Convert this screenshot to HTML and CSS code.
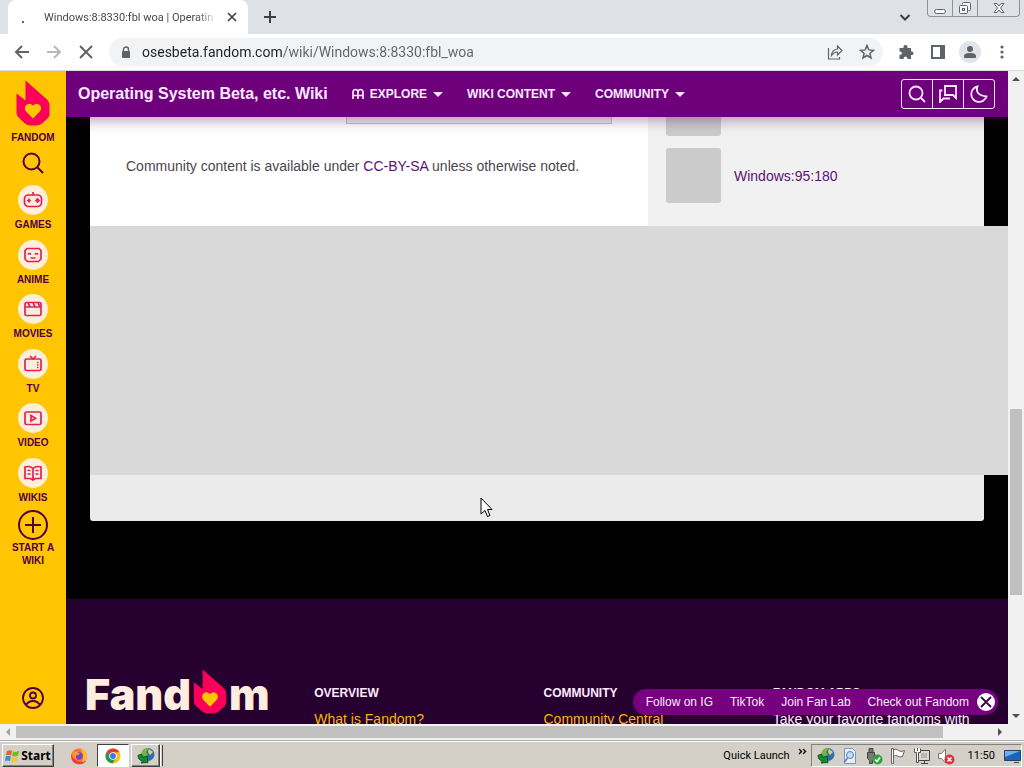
FILE: index.html
```html
<!DOCTYPE html>
<html lang="en">
<head>
  <meta charset="UTF-8">
  <title>Windows:8:8330:fbl woa | Operating System Beta, etc. Wiki</title>
  <link rel="stylesheet" href="styles.css">
</head>
<body>
  <!-- shared shapes -->
  <svg class="defs" aria-hidden="true">
    <symbol id="flame" viewBox="0 0 34 46">
      <path fill="#fa005a" d="M9.500.5 31 19.500Q33.500 22 33.500 25V34.500Q33.500 36.500 32 38L26 43.500Q23.500 45.500 20.500 45.500H14.500Q11.500 45.500 9 43.500L2.500 37.500Q.5 35.500.5 33V13.500L9.500 20.500Z"/>
      <path fill="#ffc500" d="M17 38.500 10.500 32Q7.500 28.500 10 25.300 13.500 22 17 25.500 20.500 22 24 25.300 26.500 28.500 23.500 32Z"/>
    </symbol>
    <symbol id="search" viewBox="0 0 22 22">
      <circle cx="9.500" cy="9.500" r="8"/>
      <path d="M15.500 15.500 21 21"/>
    </symbol>
    <symbol id="globe" viewBox="0 0 18 18">
      <circle cx="11" cy="7.500" r="6.500" fill="#2c6fb5"/>
      <path fill="#77b843" d="M5 4Q8 0 12 1.500L9 5 11 8 7 10 4 8Z"/>
      <path fill="#e2d264" d="m12 2 4 3-3 3-2-3Z"/>
      <path fill="#178a35" stroke="#0a5320" d="M1 8.500 4.500 7 6 10.500l4-1.500 1 6.500-7 .5 1.500-2Q1 13 1 8.500Z"/>
    </symbol>
  </svg>

  <header class="tabstrip">
    <div class="tab">
      <span class="spinner"></span>
      <span class="tab-title">Windows:8:8330:fbl woa | Operatin</span>
      <button class="tab-close" aria-label="Close tab"><svg viewBox="0 0 10 10"><path d="m1 1 8 8M9 1 1 9"/></svg></button>
    </div>
    <button class="new-tab" aria-label="New tab"><svg viewBox="0 0 14 14"><path d="M7 1v12M1 7h12"/></svg></button>
    <button class="tab-search" aria-label="Search tabs"><svg viewBox="0 0 12 12"><path d="m1.500 4 4.500 4.500L10.500 4"/></svg></button>
    <div class="window-buttons">
      <button aria-label="Minimize"><svg viewBox="0 0 14 14"><rect x="1.500" y="8.500" width="11" height="4" rx="2"/></svg></button>
      <button aria-label="Restore"><svg viewBox="0 0 14 14"><path d="M4.500 3.500V2.500q0-1 1-1h6q1 0 1 1v6q0 1-1 1h-1"/><rect x="1.500" y="4.500" width="8" height="8" rx="1"/><rect x="4.500" y="7.500" width="2" height="2"/></svg></button>
      <button class="wide" aria-label="Close"><svg viewBox="0 0 14 14"><path d="M2 2.500h3l2 2.500 2-2.500h3L8.500 7 12 11.500H9L7 9 5 11.500H2L5.500 7Z"/></svg></button>
    </div>
  </header>

  <div class="toolbar">
    <button class="tool" aria-label="Back"><svg viewBox="0 0 16 16"><path d="M15 8H2M8 2 2 8l6 6"/></svg></button>
    <button class="tool faded" aria-label="Forward"><svg viewBox="0 0 16 16"><path d="M1 8h13M8 2l6 6-6 6"/></svg></button>
    <button class="tool" aria-label="Stop"><svg viewBox="0 0 16 16"><path d="m2 2 12 12M14 2 2 14"/></svg></button>
    <div class="omnibox">
      <svg class="lock" viewBox="0 0 10 13"><rect x="1" y="5" width="8" height="7" rx="1" fill="#5f6368"/><path d="M2.500 5.500V3.500a2.500 2.500 0 0 1 5 0v2" fill="none" stroke="#5f6368" stroke-width="1.400"/></svg>
      <input type="text" class="url" aria-label="Address" value="osesbeta.fandom.com/wiki/Windows:8:8330:fbl_woa">
      <button class="tool" aria-label="Share"><svg class="thin" viewBox="0 0 16 16"><path d="M1.500 4v11h11v-2M4.500 11.500Q5 5.500 10.500 5V2L15 6.500 10.500 11V8Q7 8 4.500 11.500Z"/></svg></button>
      <button class="tool" aria-label="Bookmark"><svg viewBox="0 0 16 16"><path stroke-width="1.500" d="m8 1.500 1.800 4.400 4.700.4-3.600 3.100 1.100 4.600L8 11.500 4 14l1.100-4.600L1.500 6.300l4.700-.4Z"/></svg></button>
    </div>
    <button class="tool" aria-label="Extensions"><svg viewBox="0 0 16 16"><path class="solid" d="M2 4h3.500Q5 1 7.500 1T9.500 4H13v3.500q2.500-.5 2.500 1.700T13 11v4H9.500q0-2.500-2-2.500t-2 2.500H1.500v-4q2.500 0 2.500-1.800T1.500 7.500V4Z"/></svg></button>
    <button class="tool" aria-label="Side panel"><svg viewBox="0 0 16 16"><path class="solid" d="M1 1h14v14H1ZM3 3v10h7V3Z" fill-rule="evenodd"/></svg></button>
    <button class="tool avatar" aria-label="Profile"><svg viewBox="0 0 16 16"><circle class="solid" cx="8" cy="5" r="3"/><path class="solid" d="M2 14v-2q0-3 6-3t6 3v2Z"/></svg></button>
    <button class="tool" aria-label="Menu"><svg viewBox="0 0 16 16"><circle class="solid" cx="8" cy="3" r="1.600"/><circle class="solid" cx="8" cy="8" r="1.600"/><circle class="solid" cx="8" cy="13" r="1.600"/></svg></button>
  </div>

  <div class="viewport">
    <nav class="rail">
      <a href="#" class="rail-logo"><svg><use href="#flame"/></svg>FANDOM</a>
      <button class="rail-search" aria-label="Search"><svg><use href="#search"/></svg></button>
      <ul class="rail-list">
        <li><a href="#"><svg viewBox="0 0 30 30"><rect x="6.500" y="10" width="17" height="11.500" rx="4"/><path d="M15 7v3M9 15.500h4M11 13.500v4M18 15.500l1.500-1.500 1.500 1.500-1.500 1.500Z"/></svg>GAMES</a></li>
        <li><a href="#"><svg viewBox="0 0 30 30"><path d="M9 8.500h12l2 2V19l-2.500 2.500h-11L7 19v-8.500ZM10 14.500q1.500-2 3 0M17 14.500q1.500-2 3 0M12.500 18h5"/></svg>ANIME</a></li>
        <li><a href="#"><svg viewBox="0 0 30 30"><rect x="7" y="8.500" width="16" height="13" rx="1.500"/><path d="M7 13h16M10 9l2 3.500M15 9l2 3.500M20 9l2 3.500"/></svg>MOVIES</a></li>
        <li><a href="#"><svg viewBox="0 0 30 30"><rect x="7" y="10" width="16" height="11.500" rx="1.500"/><path d="m12 7 3 3 3-3M19 13.500h1.500M19 16h1.500M19 18.500h1.500"/></svg>TV</a></li>
        <li><a href="#"><svg viewBox="0 0 30 30"><rect x="7" y="9" width="16" height="12.500" rx="1.500"/><path d="M13 12.500v5.500l4.500-2.700Z"/></svg>VIDEO</a></li>
        <li><a href="#"><svg viewBox="0 0 30 30"><path d="M15 10.500Q12 7.500 7 9v11.500h5.500L15 22l2.500-1.500H23V9q-5-1.500-8 1.500ZV21M9.500 12.500h3M9.500 16h3M17.500 12.500h3M17.500 16h3"/></svg>WIKIS</a></li>
      </ul>
      <a href="#" class="rail-start"><svg viewBox="0 0 30 30"><circle cx="15" cy="15" r="14"/><path d="M15 7v16M7 15h16"/></svg>START A WIKI</a>
      <button class="rail-user" aria-label="Account"><svg viewBox="0 0 22 22"><circle cx="11" cy="11" r="10"/><circle cx="11" cy="8.500" r="3"/><path d="M4 18q2.500-4 7-4t7 4"/></svg></button>
    </nav>

    <div class="page">
      <header class="wiki-header">
        <a href="#" class="wiki-name">Operating System Beta, etc. Wiki</a>
        <button class="menu"><svg class="book" viewBox="0 0 12 12"><path d="M1 11V4.500Q1 1.500 3.500 1.500T6 4.500V11M6 4.500Q6 1.500 8.500 1.500T11 4.500V11M1 7.500h10"/></svg>EXPLORE<i class="caret"></i></button>
        <button class="menu">WIKI CONTENT<i class="caret"></i></button>
        <button class="menu">COMMUNITY<i class="caret"></i></button>
        <div class="wiki-tools">
          <button aria-label="Search"><svg viewBox="0 0 18 18"><circle cx="8" cy="8" r="6.500"/><path d="m13 13 4 4"/></svg></button>
          <button aria-label="Discuss"><svg viewBox="0 0 18 18"><path d="M6 1h11v12l-3-3H6ZM3.500 5.500H1V17l3.500-3.500H11"/></svg></button>
          <button aria-label="Dark theme"><svg viewBox="0 0 18 18"><path d="M7.500 1.500Q4.500 10 16.500 11.500A7.800 7.800 0 1 1 7.500 1.500Z"/></svg></button>
        </div>
      </header>

      <main class="content">
        <div class="columns">
          <article class="article">
            <div class="box-end"></div>
            <p>Community content is available under <a href="#">CC-BY-SA</a> unless otherwise noted.</p>
          </article>
          <aside class="side">
            <div class="thumb cut"></div>
            <a href="#" class="popular"><span class="thumb"></span>Windows:95:180</a>
          </aside>
        </div>
        <div class="ad"></div>
        <div class="page-end"></div>
      </main>

      <footer class="footer">
        <a href="#" class="brand" aria-label="Fandom">Fand<svg><use href="#flame"/></svg>m</a>
        <section>
          <h3>OVERVIEW</h3>
          <a href="#">What is Fandom?</a>
        </section>
        <section>
          <h3>COMMUNITY</h3>
          <a href="#">Community Central</a>
        </section>
        <section>
          <h3>FANDOM APPS</h3>
          <p>Take your favorite fandoms with</p>
        </section>
      </footer>

      <div class="wiki-bar">
        <a href="#">Follow on IG</a>
        <a href="#">TikTok</a>
        <a href="#">Join Fan Lab</a>
        <a href="#">Check out Fandom</a>
        <button aria-label="Close bar"><svg viewBox="0 0 18 18"><circle cx="9" cy="9" r="9"/><path d="m4 4 10 10M14 4 4 14"/></svg></button>
      </div>
    </div>

    <div class="vscroll">
      <i class="arrow up"></i>
      <div class="track"><div class="handle"></div></div>
      <i class="arrow down"></i>
    </div>

    <svg class="cursor" viewBox="0 0 13 21"><path d="M1 1v16l4-3.500L7.500 19.500l2.500-1L7.500 12.500H12Z" fill="#fff" stroke="#000"/></svg>
  </div>

  <div class="hscroll">
    <i class="arrow left"></i>
    <div class="track"><div class="handle"></div></div>
    <i class="arrow right"></i>
  </div>

  <footer class="taskbar">
    <button class="start"><svg viewBox="0 0 16 16"><path fill="#e8602c" d="M2 3q3-2 5.500-.5L6.500 7.500Q4 6 1 7.500Z"/><path fill="#76b82a" d="M8.500 3q3 1.500 6.500-.5L14 7.500q-3 1.500-6.500.5Z"/><path fill="#3c8fd6" d="M.8 8.500q3-1.500 5.500 0l-1 5Q3 12-.2 13.500Z"/><path fill="#fbc62d" d="M7.200 9q3 1.500 6.500-.3l-1 5q-3 1.500-6.500.3Z"/></svg>Start</button>
    <button class="launch" aria-label="Firefox"><svg viewBox="0 0 18 18"><circle cx="9" cy="9.500" r="8" fill="#ff7139"/><path fill="#ffbd2e" d="M11 1q6 3.500 6 9-1 5-6 6 3-4 2-9Q11 5 11 1Z"/><path fill="#f2334c" d="M1 9q1 8 9 8 4 0 6-3-5 2-9 0-5-2-6-8Z"/><circle cx="9" cy="9" r="3.700" fill="#7542c9"/><path fill="#ff9a1f" d="M3 4q2 1 4 1l3 1.500Q9 8 6.500 8.500 5 10 7 12 2 12 3 4Z"/></svg></button>
    <button class="task active" aria-label="Chrome"><svg viewBox="0 0 18 18"><circle cx="9" cy="9" r="7.500" fill="#fbc116"/><path fill="#e33b2e" d="M9 9 2.500 5.200A7.500 7.500 0 0 1 15.500 5.200L9 5.500Z"/><path fill="#249a4c" d="M9 9 2.500 5.200A7.500 7.500 0 0 0 8.500 16.500L12 10.800Z"/><circle cx="9" cy="9" r="3.800" fill="#fff"/><circle cx="9" cy="9" r="2.900" fill="#3979e8"/></svg></button>
    <button class="task" aria-label="Download manager"><svg><use href="#globe"/></svg></button>
    <i class="grip"></i>
    <span class="quick">Quick Launch</span>
    <button class="more" aria-label="Show more"><svg viewBox="0 0 9 7"><path d="m1 1 2.500 2.500L1 6M5 1l2.500 2.500L5 6"/></svg></button>
    <div class="tray">
      <svg><use href="#globe"/></svg>
      <svg viewBox="0 0 18 18"><path fill="#e6effb" stroke="#7c95be" d="M3.500 1.500h8l3 3v12h-11Z"/><circle cx="9" cy="8" r="3.500" fill="#c7dcf5" stroke="#5580bf"/><path stroke="#5580bf" stroke-width="1.500" d="m6.500 11-3 4"/></svg>
      <svg viewBox="0 0 18 18"><path fill="#777" stroke="#444" d="M2.500 5.500h7v6l-2 2v3h-3v-3l-2-2ZM4 1.500h4v4H4Z"/><circle cx="12.500" cy="12.500" r="5" fill="#31a336"/><path fill="none" stroke="#fff" stroke-width="1.600" d="m10 12.500 2 2 3-4"/></svg>
      <svg viewBox="0 0 18 18"><path fill="#fff" stroke="#666" d="M2.500 1.500h2v15h-2ZM4.500 2.500q3-1 5 1t6 0l-2 6q-3 1-5-.5t-4 .5Z"/></svg>
      <svg viewBox="0 0 18 18"><path fill="#d9d9d3" stroke="#444" d="M5.500 3.500h11v10h-11ZM8 16.500h7M11.500 13.500v3"/><path fill="#b9b9b3" d="M8 6h6v5H8Z"/><path fill="#fff" stroke="#555" d="M1.500 1.500v4h2v10h2v-10h2v-4M4.500 1v3"/></svg>
      <svg viewBox="0 0 18 18"><path fill="#fff" stroke="#777" d="M1.500 6.500h3l4-4.500v14l-4-4.500h-3Z"/><circle cx="12.500" cy="12.500" r="5" fill="#da3340"/><path stroke="#fff" stroke-width="1.500" d="m10.500 10.500 4 4M14.500 10.500l-4 4"/></svg>
      <time>11:50</time>
      <svg viewBox="0 0 18 18"><path fill="#1d63b8" stroke="#23405f" d="M1.500 3.500h16v10h-16Z"/><path fill="#6ab0ee" d="M2 4h15L2 10Z"/><path stroke="#444" d="M11 15.500h5"/></svg>
    </div>
  </footer>
</body>
</html>
```
FILE: styles.css
```css
* {
  box-sizing: border-box;
}

body {
  margin: 0;
  height: 100vh;
  display: flex;
  flex-direction: column;
  overflow: hidden;
  font-family: "Liberation Sans", Arial, sans-serif;
  font-size: 14px;
}

a {
  color: inherit;
  text-decoration: none;
}

button {
  display: flex;
  align-items: center;
  justify-content: center;
  padding: 0;
  border: none;
  background: none;
  color: inherit;
  font: inherit;
}

svg {
  flex: none;
  fill: none;
}

h3,
p,
ul {
  margin: 0;
  padding: 0;
}

.defs {
  position: absolute;
  width: 0;
  height: 0;
}

/* browser tabs */
.tabstrip {
  flex: none;
  display: flex;
  align-items: center;
  height: 34px;
  padding: 0 4px 0 8px;
  background: #dee1e6;
}

.tab {
  display: flex;
  align-items: center;
  width: 240px;
  height: 34px;
  padding: 0 11px 0 14px;
  border-radius: 8px 8px 0 0;
  background: #fff;
}

.spinner {
  width: 2px;
  height: 2px;
  margin: 10px 20px 0 0;
  background: #5f6368;
}

.tab-title {
  flex: 1;
  overflow: hidden;
  white-space: nowrap;
  font: 11px Roboto, sans-serif;
  color: #45494d;
  -webkit-mask-image: linear-gradient(90deg, #000 88%, transparent);
}

.tab-close svg {
  width: 10px;
  height: 10px;
  margin-left: 9px;
  stroke: #3c4043;
  stroke-width: 1.6;
}

.new-tab {
  margin-left: 15px;
}

.new-tab svg {
  width: 14px;
  height: 14px;
  stroke: #3c4043;
  stroke-width: 2;
}

.tab-search {
  margin: 0 16px 0 auto;
}

.tab-search svg {
  width: 12px;
  height: 12px;
  stroke: #3c4043;
  stroke-width: 2;
}

.window-buttons {
  display: flex;
  align-self: flex-start;
  height: 17px;
  border: 1px solid #8d929b;
  border-top: none;
  border-radius: 0 0 4px 4px;
}

.window-buttons button {
  width: 25px;
  border-right: 1px solid #8d929b;
}

.window-buttons .wide {
  width: 41px;
  border-right: none;
}

.window-buttons svg {
  width: 14px;
  height: 14px;
  fill: #f7f8fa;
  stroke: #60656d;
}

/* address row */
.toolbar {
  flex: none;
  display: flex;
  align-items: center;
  height: 37px;
  padding: 0 6px;
  border-bottom: 1px solid #dcdde0;
  background: #fff;
}

.tool {
  flex: none;
  width: 32px;
  height: 28px;
}

.tool svg {
  width: 16px;
  height: 16px;
  stroke: #5f6368;
  stroke-width: 2;
}

.tool .thin {
  stroke-width: 1.2;
}

.tool .solid {
  fill: #5f6368;
  stroke: none;
}

.faded svg {
  opacity: 0.45;
}

.avatar svg {
  box-sizing: content-box;
  padding: 3px;
  border-radius: 50%;
  background: #dfe3ea;
}

.omnibox {
  flex: 1;
  display: flex;
  align-items: center;
  height: 28px;
  margin: 0 7px;
  padding-left: 12px;
  border-radius: 14px;
  background: #f1f3f4;
}

.lock {
  width: 10px;
  height: 13px;
}

.url {
  flex: 1;
  min-width: 0;
  height: 28px;
  margin-left: 11px;
  padding: 0;
  border: none;
  outline: none;
  font: 14px Roboto, sans-serif;
  /* host part darker than the path */
  color: transparent;
  background: linear-gradient(90deg, #202124 140px, #5f6368 140px);
  -webkit-background-clip: text;
  background-clip: text;
}

.viewport {
  position: relative;
  flex: 1;
  min-height: 0;
  display: flex;
}

/* left rail */
.rail {
  flex: none;
  display: flex;
  flex-direction: column;
  align-items: center;
  width: 66px;
  padding: 9px 0 15px;
  background: #ffc500;
  color: #520044;
  font-size: 10px;
  font-weight: bold;
  line-height: 13px;
  text-align: center;
}

.rail a {
  display: flex;
  flex-direction: column;
  align-items: center;
}

.rail-logo svg {
  width: 34px;
  height: 46px;
  margin-bottom: 5px;
}

.rail-search,
.rail-user,
.rail-start {
  stroke: #520044;
  stroke-width: 2;
}

.rail-search svg,
.rail-user svg {
  width: 22px;
  height: 22px;
}

.rail-search {
  margin: 8px 0 11px;
}

.rail-list {
  display: flex;
  flex-direction: column;
  justify-content: space-between;
  height: 319px;
  list-style: none;
}

.rail-list svg {
  width: 30px;
  height: 30px;
  margin-bottom: 3px;
  border-radius: 50%;
  background: #ffefd8;
  stroke: #e0205c;
  stroke-width: 1.7;
}

.rail-start {
  width: 50px;
  margin-top: 6px;
}

.rail-start svg {
  width: 30px;
  height: 30px;
  margin-bottom: 1px;
}

.rail-user {
  margin-top: auto;
  stroke-width: 1.8;
}

/* wiki page */
.page {
  position: relative;
  flex: 1;
  min-width: 0;
  overflow: hidden;
  background: #000;
}

.wiki-header {
  position: relative;
  z-index: 1;
  display: flex;
  align-items: center;
  height: 46px;
  padding: 0 13px 0 12px;
  background: #6e007c;
  box-shadow: 0 4px 12px rgba(60, 0, 60, 0.35);
  color: #ffe8ff;
  font-size: 12px;
  font-weight: bold;
}

.wiki-name {
  font-size: 16px;
}

.menu {
  margin-left: 24px;
}

.book {
  width: 12px;
  height: 12px;
  margin-right: 6px;
  stroke: #ffe8ff;
  stroke-width: 1.7;
}

.caret {
  margin-left: 6px;
  border: 5px solid transparent;
  border-top-color: #ffe8ff;
  border-bottom: none;
}

.wiki-tools {
  display: flex;
  height: 30px;
  margin-left: auto;
  border: 1px solid #ffe8ff;
  border-radius: 3px;
}

.wiki-tools button {
  width: 31px;
  border-left: 1px solid #ffe8ff;
}

.wiki-tools button:first-child {
  width: 30px;
  border-left: none;
}

.wiki-tools svg {
  width: 18px;
  height: 18px;
  stroke: #ffe8ff;
  stroke-width: 1.8;
}

.content {
  padding-left: 24px;
}

.columns {
  display: flex;
  height: 109px;
  margin-right: 24px;
}

.article {
  flex: 1;
  padding: 0 36px;
  background: #fff;
  color: #4b464d;
  line-height: 20px;
}

.box-end {
  width: 266px;
  height: 7px;
  margin: 0 auto 32px 220px;
  border: 1px solid #c4c4c4;
  border-top: none;
  background: #eee;
}

.article a,
.popular {
  color: #5c1270;
}

.side {
  width: 336px;
  padding-left: 18px;
  background: #f1f1f1;
}

.thumb {
  width: 55px;
  height: 55px;
  border-radius: 3px;
  background: #cbcbcb;
}

.thumb.cut {
  height: 19px;
  margin-bottom: 12px;
  border-radius: 0 0 3px 3px;
}

.popular {
  display: flex;
  align-items: center;
  gap: 13px;
}

.ad {
  height: 249px;
  background: #d9d9d9;
}

.page-end {
  height: 46px;
  margin-right: 24px;
  border-radius: 0 0 3px 3px;
  background: #ebebeb;
}

.footer {
  display: grid;
  grid-template-columns: repeat(4, 1fr);
  height: 300px;
  margin-top: 78px;
  padding: 70px 6px 0 19px;
  background: #26002f;
  color: #ffeaff;
}

.brand {
  display: flex;
  align-items: flex-end;
  align-self: start;
  height: 45px;
  color: #ffeee0;
  font: 900 43px/40px Inter, sans-serif;
}

.brand svg {
  width: 34px;
  height: 45px;
  margin: 0 2px;
}

.footer h3 {
  margin: 16px 0 8px;
  font-size: 12px;
  line-height: 16px;
}

.footer section a,
.footer p {
  line-height: 20px;
}

.footer section a {
  color: #f5b50a;
}

.wiki-bar {
  position: absolute;
  right: 10px;
  bottom: 9px;
  display: flex;
  align-items: center;
  gap: 17px;
  height: 26px;
  padding: 0 3px 0 13px;
  border-radius: 13px;
  background: #76007f;
  color: #ffe8ff;
  font-size: 12px;
}

.wiki-bar button {
  margin-left: -9px;
}

.wiki-bar svg {
  width: 18px;
  height: 18px;
  fill: #fff;
  stroke: #3a0545;
  stroke-width: 1.8;
}

.wiki-bar circle {
  stroke: none;
}

/* scrollbars */
.vscroll,
.hscroll {
  flex: none;
  display: flex;
  align-items: center;
  background: #f1f1f1;
}

.vscroll {
  flex-direction: column;
  width: 16px;
  padding: 6px 0;
}

.hscroll {
  height: 17px;
  padding: 0 22px 0 6px;
  border-bottom: 1px solid #aaa;
}

.track {
  flex: 1;
  display: grid;
}

.handle {
  background: #c0c0c0;
}

.vscroll .track {
  width: 12px;
  margin: 6px 0;
  grid-template-rows: 321fr 186fr 113fr;
}

.vscroll .handle {
  grid-row: 2;
}

.hscroll .track {
  height: 12px;
  margin: 0 5px 0 6px;
  grid-template-columns: 928fr 50fr;
}

.arrow {
  border: 4px solid transparent;
}

.up {
  border-top: none;
  border-bottom-color: #505050;
}

.down {
  border-bottom: none;
  border-top-color: #505050;
}

.left {
  border-left: none;
  border-right-color: #a3a3a3;
}

.right {
  border-right: none;
  border-left-color: #505050;
}

.cursor {
  position: absolute;
  left: 480px;
  top: 426px;
  width: 13px;
  height: 21px;
}

/* taskbar */
.taskbar {
  flex: none;
  display: flex;
  align-items: center;
  height: 27px;
  padding: 1px 2px 0;
  border-top: 1px solid #fff;
  background: #d4d0c8;
  font: 11px Roboto, sans-serif;
  color: #000;
}

.taskbar svg {
  width: 18px;
  height: 18px;
}

.start,
.task {
  height: 23px;
  border: 1px solid;
  border-color: #fff #404040 #404040 #fff;
  box-shadow: inset -1px -1px #808080;
}

.start {
  width: 52px;
  gap: 1px;
  font-family: "Noto Sans", sans-serif;
  font-size: 12px;
  font-weight: bold;
}

.taskbar .start svg {
  width: 15px;
  height: 16px;
}

.launch {
  width: 32px;
  margin: 0 2px 0 9px;
}

.task {
  width: 29px;
}

.task.active {
  width: 32px;
  margin-right: 2px;
  border-color: #404040 #fff #fff #404040;
  background: #fff;
  box-shadow: none;
}

.grip {
  width: 3px;
  height: 21px;
  border-left: 1px solid #fff;
  border-right: 1px solid #404040;
}

.quick {
  margin-left: auto;
}

.more {
  margin: 0 4px 8px 8px;
}

.taskbar .more svg {
  width: 9px;
  height: 7px;
  stroke: #000;
  stroke-width: 1.4;
}

.tray {
  display: flex;
  align-items: center;
  gap: 6px;
  height: 23px;
  padding: 0 0 0 5px;
  border: 1px solid;
  border-color: #808080 #fff #fff #808080;
}

.tray time {
  margin: 0 2px 0 7px;
}
```
